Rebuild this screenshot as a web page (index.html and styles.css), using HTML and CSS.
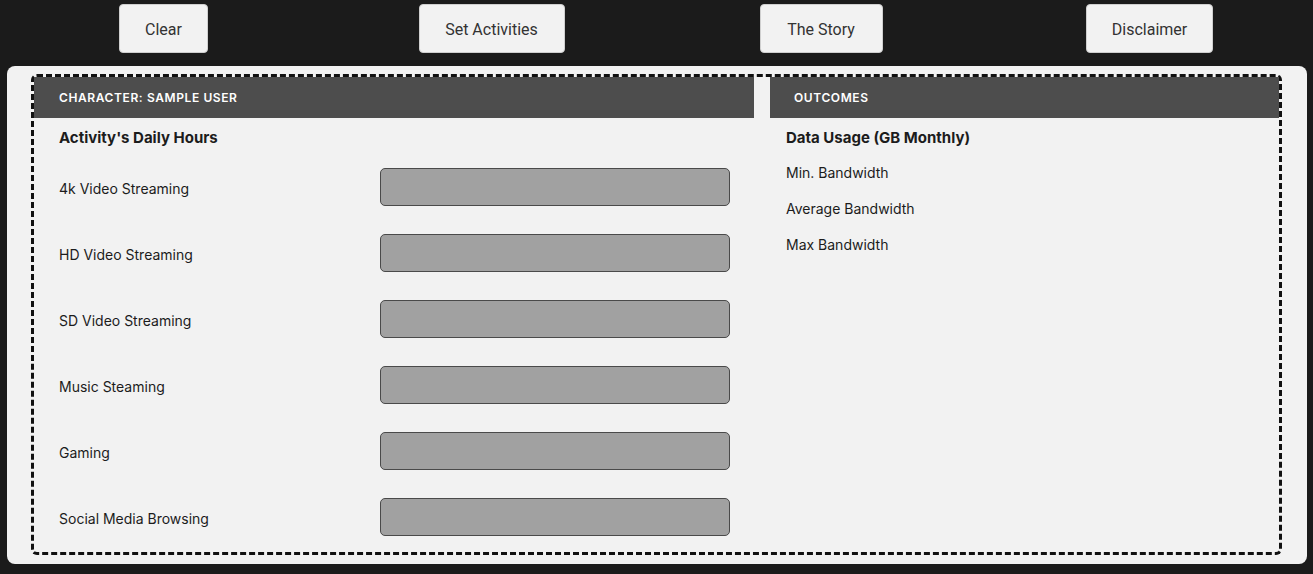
FILE: index.html
```html
<!DOCTYPE html>
<html lang="en">
<head>
<meta charset="utf-8">
<title>Bandwidth Calculator</title>
<link rel="stylesheet" href="styles.css">
</head>
<body>
<nav class="topbar">
  <div class="slot"><button class="btn btn-clear">Clear</button></div>
  <div class="slot"><button class="btn btn-set">Set Activities</button></div>
  <div class="slot"><button class="btn btn-story">The Story</button></div>
  <div class="slot"><button class="btn btn-disc">Disclaimer</button></div>
</nav>
<main class="panel">
  <div class="frame">
    <section class="col col-left">
      <header class="col-head">Character: Sample User</header>
      <div class="col-body">
        <h2 class="heading">Activity's Daily Hours</h2>
        <div class="rows">
          <div class="row"><span class="label">4k Video Streaming</span><div class="field"></div></div>
          <div class="row"><span class="label">HD Video Streaming</span><div class="field"></div></div>
          <div class="row"><span class="label">SD Video Streaming</span><div class="field"></div></div>
          <div class="row"><span class="label">Music Steaming</span><div class="field"></div></div>
          <div class="row"><span class="label">Gaming</span><div class="field"></div></div>
          <div class="row"><span class="label">Social Media Browsing</span><div class="field"></div></div>
        </div>
      </div>
    </section>
    <section class="col col-right">
      <header class="col-head">Outcomes</header>
      <div class="col-body col-body-right">
        <h2 class="heading">Data Usage (GB Monthly)</h2>
        <ul class="outs">
          <li>Min. Bandwidth</li>
          <li>Average Bandwidth</li>
          <li>Max Bandwidth</li>
        </ul>
      </div>
    </section>
  </div>
</main>
</body>
</html>
```
FILE: styles.css
```css
* { box-sizing: border-box; }
html, body { margin: 0; padding: 0; }
body {
  background: #1b1b1b;
  font-family: Inter, "Noto Sans", sans-serif;
  color: #1c1c1c;
  width: 1313px;
  height: 574px;
  overflow: hidden;
}
.topbar {
  display: grid;
  grid-template-columns: 327px 329px 330px 327px;
  padding-top: 4px;
  height: 66px;
}
.slot { display: flex; justify-content: center; align-items: flex-start; }
.btn {
  height: 49px;
  background: #f2f2f2;
  border: 1px solid #cfcfcf;
  border-radius: 4px;
  font-family: Roboto, "Liberation Sans", sans-serif;
  font-size: 16px;
  color: #333;
  padding: 2px 0 0;
}
.btn-clear { width: 89px; }
.btn-set { width: 146px; }
.btn-story { width: 123px; }
.btn-disc { width: 127px; }
.panel {
  margin: 0 6px 0 7px;
  background: #f2f2f2;
  border-radius: 8px;
  padding: 8px 25px 9px 24px;
  height: 498px;
}
.frame {
  border: 3px dashed #111;
  border-radius: 6px;
  height: 481px;
  display: grid;
  grid-template-columns: 720px 1fr;
  gap: 16px;
}
.col-head {
  background: #4d4d4d;
  color: #fff;
  height: 41px;
  display: flex;
  align-items: center;
  padding-left: 25px;
  font-size: 12px;
  font-weight: 600;
  text-transform: uppercase;
  letter-spacing: 0.6px;
}
.col-right .col-head { padding-left: 24px; }
.col-body { padding: 11px 0 0 25px; }
.col-body-right { padding-left: 16px; }
.heading {
  margin: 0;
  font-size: 15px;
  font-weight: 700;
  line-height: 18px;
}
.rows {
  margin-top: 21px;
  display: flex;
  flex-direction: column;
  gap: 28px;
}
.row { display: flex; align-items: center; height: 38px; }
.label { width: 321px; font-size: 14px; padding-top: 2px; }
.field {
  width: 350px;
  height: 38px;
  background: #a1a1a1;
  border: 1px solid #4a4a4a;
  border-radius: 5px;
}
.outs {
  list-style: none;
  margin: 17px 0 0;
  padding: 0;
  display: flex;
  flex-direction: column;
  gap: 18px;
  font-size: 14px;
}
.outs li { line-height: 18px; }
```
